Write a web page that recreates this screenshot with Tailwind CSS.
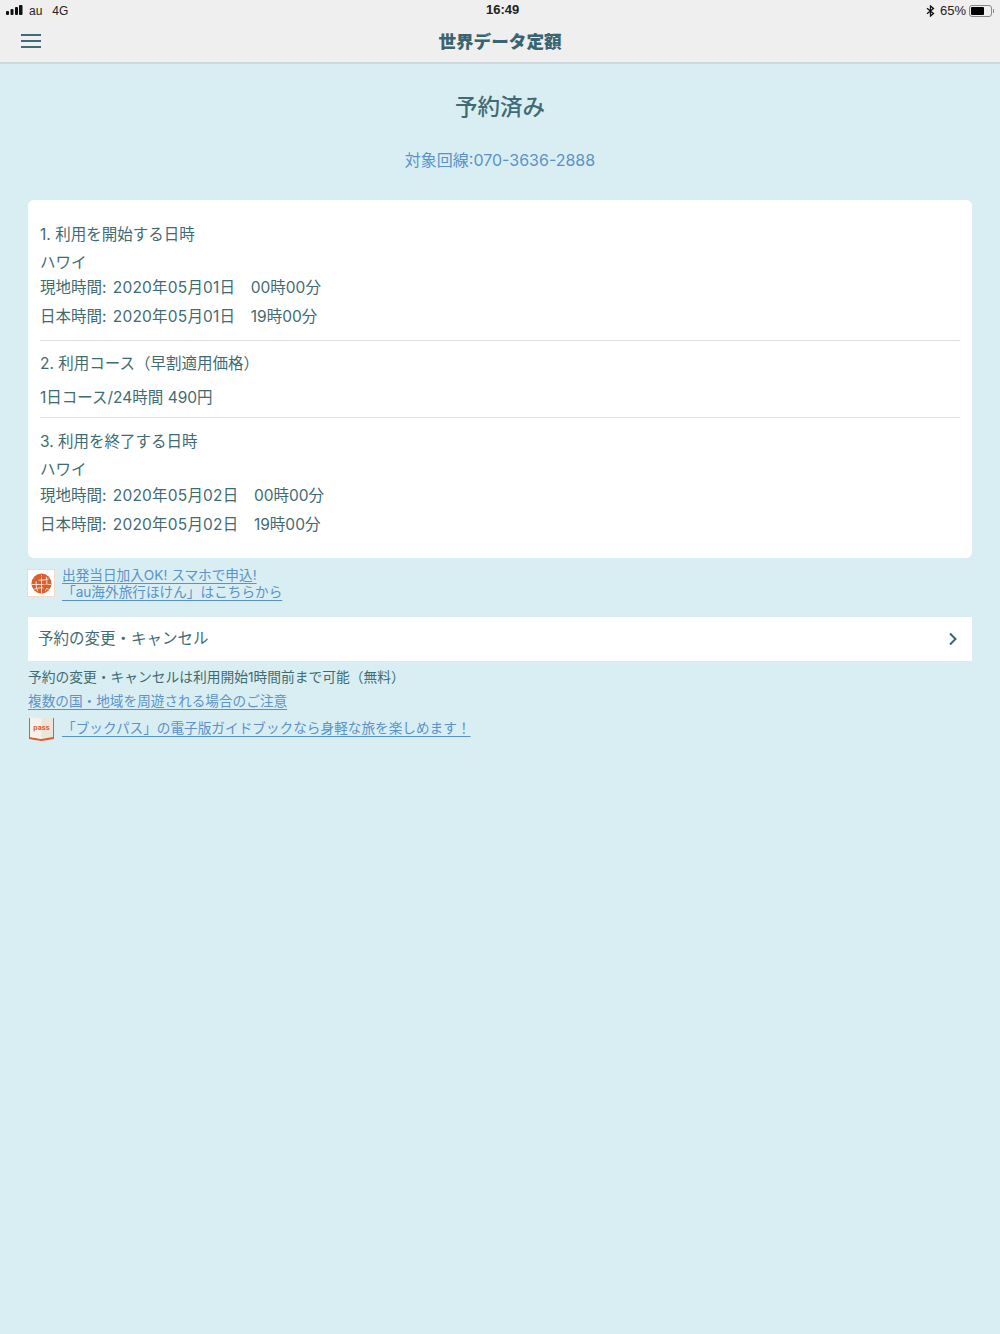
<!DOCTYPE html>
<html lang="ja">
<head>
    <meta charset="UTF-8">
    <meta name="viewport" content="width=device-width, initial-scale=1.0">
    <title>世界データ定額</title>
    <script src="https://cdn.jsdelivr.net/npm/@tailwindcss/browser@4"></script>
</head>
<body class="w-[1000px] h-[1334px] overflow-hidden bg-[#d9eef3] text-[#3f6b72] font-['Inter','Noto_Sans_CJK_JP',sans-serif]">
    <!-- status bar + header -->
    <header class="h-[64px] bg-[#efefef] border-b-2 border-[#ced9dc]">
        <div class="relative h-[21px] pl-[6px] pr-[6px] flex items-center justify-between text-[12px] text-[#222] font-['Liberation_Sans',sans-serif]">
            <div class="flex items-center">
                <svg width="17" height="11" viewBox="0 0 17 11" fill="#111"><rect x="0" y="6" width="3" height="4" rx="1"/><rect x="4.500" y="4" width="3" height="6" rx="1"/><rect x="9" y="2" width="3" height="8" rx="1"/><rect x="13" y="0" width="3.500" height="10" rx="1"/></svg>
                <span class="ml-[6px]">au</span>
                <span class="ml-[10px]">4G</span>
            </div>
            <div class="absolute left-[486px] top-[2px] font-bold text-[13px] leading-[16px]">16:49</div>
            <div class="flex items-center">
                <svg width="9" height="12" viewBox="0 0 9 12" fill="none" stroke="#111" stroke-width="1.300"><path d="M1 3.200 7.500 8.500 4.500 11V1l3 2.500L1 8.800"/></svg>
                <span class="ml-[5px] text-[13px]">65%</span>
                <div class="ml-[3px] w-[23px] h-[12px] border border-[#888] rounded-[3px] p-[1px]"><div class="w-[13px] h-full bg-black rounded-[1px]"></div></div>
                <div class="w-[1px] h-[4px] bg-[#888] ml-[1px]"></div>
            </div>
        </div>
        <div class="relative h-[41px] flex items-center justify-center">
            <div class="absolute left-[21px] top-[13px] w-[20px] flex flex-col gap-[4px]">
                <div class="h-[2px] bg-[#3f6b78]"></div>
                <div class="h-[2px] bg-[#3f6b78]"></div>
                <div class="h-[2px] bg-[#3f6b78]"></div>
            </div>
            <h1 class="mt-[1px] text-[17.6px] font-black text-[#3a6570]">世界データ定額</h1>
        </div>
    </header>

    <main class="px-[28px]">
        <h2 class="mt-[26px] text-center text-[22.5px] leading-[34px] font-medium text-[#3f6b72]">予約済み</h2>
        <p class="mt-[24px] text-center text-[16px] leading-[24px] text-[#5b92c8]">対象回線:070-3636-2888</p>

        <section class="mt-[28px] h-[358px] bg-white rounded-[6px] px-[12px] text-[15.5px]">
            <div class="h-[141px] border-b border-[#dde3e4] pt-[23px]">
                <p class="leading-[24px]">1. 利用を開始する日時</p>
                <p class="mt-[4px] leading-[24px]">ハワイ</p>
                <p class="leading-[26px] whitespace-pre">現地時間: <span class="ml-[2px] tracking-[0.2px]">2020年05月01日</span>　00時00分</p>
                <p class="mt-[3px] leading-[26px] whitespace-pre">日本時間: <span class="ml-[2px] tracking-[0.2px]">2020年05月01日</span>　19時00分</p>
            </div>
            <div class="h-[77px] border-b border-[#dde3e4] pt-[11px]">
                <p class="leading-[24px]">2. 利用コース（早割適用価格）</p>
                <p class="mt-[10px] leading-[24px]">1日コース/24時間 490円</p>
            </div>
            <div class="pt-[12px]">
                <p class="leading-[24px]">3. 利用を終了する日時</p>
                <p class="mt-[4px] leading-[24px]">ハワイ</p>
                <p class="mt-[1px] leading-[26px] whitespace-pre">現地時間: <span class="ml-[2px] tracking-[0.2px]">2020年05月02日</span>　00時00分</p>
                <p class="mt-[3px] leading-[26px] whitespace-pre">日本時間: <span class="ml-[2px] tracking-[0.2px]">2020年05月02日</span>　19時00分</p>
            </div>
        </section>

        <a class="mt-[9px] flex items-center text-[13.65px] leading-[17px] text-[#5b92c8]">
            <div class="ml-[-1px] mt-[-2px] w-[28px] h-[28px] bg-white border border-[#f3d9cc] flex items-center justify-center shrink-0">
                <svg width="21" height="21" viewBox="0 0 22 22"><circle cx="11" cy="11" r="10.500" fill="#d9602c"/><path d="M1 12h20M11 2v19M6 4c-1 5-1 11 1 15M16 4c1 5 1 11-1 15M3.500 6c4 2 11 2 15 0M3.500 17c4-2 11-2 15 0" fill="none" stroke="#fff" stroke-width=".8"/><path d="M4 5c2-2 5-3 7-2 1 2-1 4-3 4L6 9 3 8zM13 12l5 0c0 3-2 5-4 6-1-2-2-4-1-6z" fill="#d9602c"/></svg>
            </div>
            <div class="ml-[7px] underline underline-offset-[3px] [text-decoration-skip-ink:none]">
                <p>出発当日加入OK! スマホで申込!</p>
                <p>「au海外旅行ほけん」はこちらから</p>
            </div>
        </a>

        <div class="mt-[16px] h-[44px] bg-white pl-[10px] pr-[14px] flex items-center justify-between text-[15.5px]">
            <span>予約の変更・キャンセル</span>
            <svg width="10" height="14" viewBox="0 0 10 14" fill="none" stroke="#3a6570" stroke-width="2"><path d="M2 1.500 7.500 7 2 12.500"/></svg>
        </div>

        <p class="mt-[7px] text-[13.75px] leading-[18px]">予約の変更・キャンセルは利用開始1時間前まで可能（無料）</p>
        <a class="block mt-[6px] text-[13.65px] leading-[18px] text-[#5b92c8] underline underline-offset-[3px] [text-decoration-skip-ink:none]">複数の国・地域を周遊される場合のご注意</a>
        <a class="mt-[6px] flex items-center text-[13.65px] text-[#5b92c8]">
            <svg class="shrink-0" width="27" height="25" viewBox="0 0 27 25"><path d="M1 2 13.500 3.500 26 2V23L13.500 25 1 23Z" fill="#d9602c"/><path d="M2 1 13.500 2.500 25 1V21L13.500 23 2 21Z" fill="#ece5dc"/><path d="M2 1 13.500 2.500V23L2 21Z" fill="#f6f1ea"/><text x="13.500" y="14" text-anchor="middle" font-size="7" font-weight="700" fill="#d9602c">pass</text></svg>
            <span class="ml-[7px] underline underline-offset-[3px] [text-decoration-skip-ink:none]">「ブックパス」の電子版ガイドブックなら身軽な旅を楽しめます！</span>
        </a>
    </main>
</body>
</html>
